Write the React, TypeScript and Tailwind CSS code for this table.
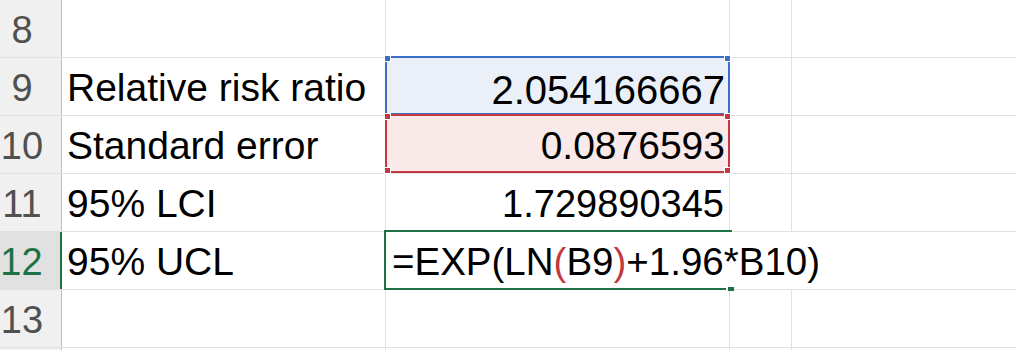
const font = { fontFamily: '"Liberation Sans", Arial, sans-serif' };

function Header({ n, active }: { n?: number; active?: boolean }) {
  return (
    <div
      className={
        "w-[62px] h-full flex items-end justify-center pr-[17px] pb-2 border-r text-[38px] leading-none " +
        (active
          ? "bg-[#e1e1e1] text-[#1e7145] border-r-2 border-r-[#1e7145]"
          : "bg-[#f0f0f0] text-[#505050] border-r-[#bdbdbd]")
      }
    >
      {n}
    </div>
  );
}

function Corner({ color, pos }: { color: string; pos: string }) {
  return <span className={"absolute w-[7px] h-[7px] border border-white " + color + " " + pos} />;
}

function Row({ n, children, last }: { n?: number; children?: React.ReactNode; last?: boolean }) {
  return (
    <div className={"flex h-[58px] shrink-0 " + (last ? "" : "border-b border-[#e1e1e1]")}>
      {children ?? (
        <>
          <Header n={n} />
          <div className="w-[324px] border-r border-[#e1e1e1]" />
          <div className="w-[344px] border-r border-[#e1e1e1]" />
          <div className="w-[62px] border-r border-[#e1e1e1]" />
          <div className="flex-1" />
        </>
      )}
    </div>
  );
}

export default function App() {
  return (
    <div className="w-[1016px] h-[350px] overflow-hidden bg-white text-black flex flex-col" style={font}>
      <Row n={8} />

      <Row n={9}>
        <Header n={9} />
        <div className="w-[324px] border-r border-[#e1e1e1] flex items-end pl-[5px] pb-2 text-[39px] leading-none">
          Relative risk ratio
        </div>
        <div className="relative w-[344px] bg-[#ebf0f8] flex items-end justify-end pr-[5px] pb-[5px] text-[40px] leading-none">
          2.054166667
          <div className="absolute -left-px -top-0.5 right-0 bottom-0 border-2 border-[#3b6fc6]">
            <Corner color="bg-[#3b6fc6]" pos="-left-[3px] -top-[3px]" />
            <Corner color="bg-[#3b6fc6]" pos="-right-[3px] -top-[3px]" />
          </div>
        </div>
        <div className="w-[62px] border-r border-[#e1e1e1]" />
        <div className="flex-1" />
      </Row>

      <Row n={10}>
        <Header n={10} />
        <div className="w-[324px] border-r border-[#e1e1e1] flex items-end pl-[5px] pb-2 text-[39px] leading-none">
          Standard error
        </div>
        <div className="relative w-[344px] bg-[#f9e9e9] flex items-end justify-end pr-[5px] pb-2 text-[39px] leading-none">
          0.0876593
          <div className="absolute -left-px -top-0.5 right-0 bottom-0 border-2 border-[#c3393f]">
            <Corner color="bg-[#c3393f]" pos="-left-[3px] -top-[3px]" />
            <Corner color="bg-[#c3393f]" pos="-right-[3px] -top-[3px]" />
            <Corner color="bg-[#c3393f]" pos="-left-[3px] -bottom-[3px]" />
            <Corner color="bg-[#c3393f]" pos="-right-[3px] -bottom-[3px]" />
          </div>
        </div>
        <div className="w-[62px] border-r border-[#e1e1e1]" />
        <div className="flex-1" />
      </Row>

      <Row n={11}>
        <Header n={11} />
        <div className="w-[324px] border-r border-[#e1e1e1] flex items-end pl-[5px] pb-2 text-[39px] leading-none">
          95% LCI
        </div>
        <div className="w-[344px] border-r border-[#e1e1e1] flex items-end justify-end pr-[5px] pb-2 text-[38px] leading-none">
          1.729890345
        </div>
        <div className="w-[62px] border-r border-[#e1e1e1]" />
        <div className="flex-1" />
      </Row>

      <Row n={12}>
        <Header n={12} active />
        <div className="w-[324px] border-r border-[#e1e1e1] flex items-end pl-[5px] pb-2 text-[39px] leading-none">
          95% UCL
        </div>
        <div className="relative w-[344px] flex items-end pl-[6px] pb-2 text-[38.5px] leading-none whitespace-nowrap">
          <span>
            =EXP(LN<span className="text-[#c3393f]">(</span>B9<span className="text-[#c3393f]">)</span>+1.96*B10)
          </span>
          <div className="absolute -left-0.5 -top-0.5 -right-0.5 -bottom-px border-2 border-r-0 border-[#1e7145] border-b-transparent">
            <span className="absolute -left-0.5 -bottom-0.5 w-[342px] h-0.5 bg-[#1e7145]" />
            <span className="absolute -right-0.5 -bottom-[3px] w-[6px] h-[4px] bg-[#1e7145]" />
          </div>
        </div>
        <div className="w-[62px]" />
        <div className="flex-1" />
      </Row>

      <Row n={13} />
      <Row last />
    </div>
  );
}
